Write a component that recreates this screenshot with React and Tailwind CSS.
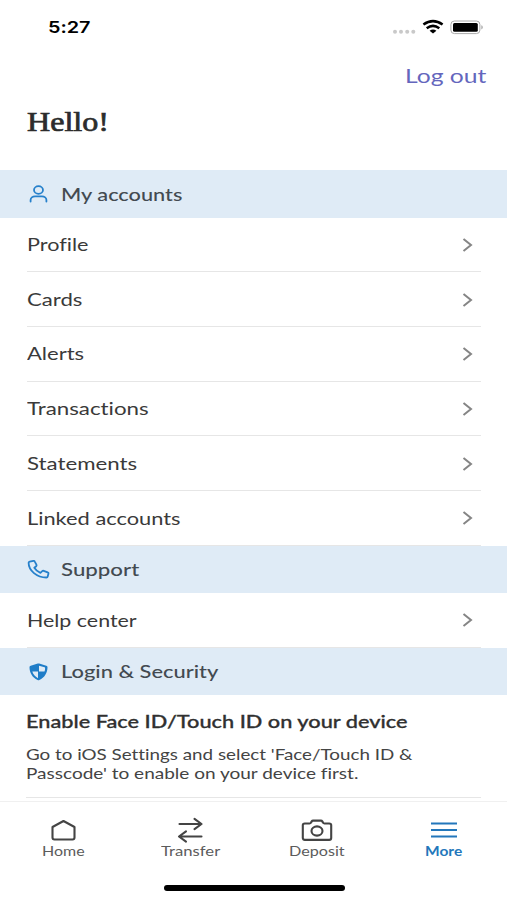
import { useLayoutEffect, useRef, useState } from "react";

// Wide lettering: stretches a line of text horizontally to the given width.
function Wide({ width, className = "", children }) {
  const ref = useRef(null);
  const [scale, setScale] = useState(1);
  useLayoutEffect(() => {
    const fit = () => setScale(width / ref.current.offsetWidth);
    fit();
    document.fonts?.ready.then(() => ref.current && fit());
  }, [width]);
  return (
    <span className={`block whitespace-nowrap ${className}`} style={{ width }}>
      <span ref={ref} className="inline-block origin-left" style={{ transform: `scaleX(${scale})` }}>
        {children}
      </span>
    </span>
  );
}

function PersonIcon() {
  return (
    <svg className="h-6 w-6" viewBox="0 0 24 24" fill="none" stroke="#2680cb" strokeWidth="1.8" strokeLinecap="round">
      <ellipse cx="11.5" cy="8" rx="4.5" ry="3.8" />
      <path d="M3.600 19.500V18c0-2.100 2-3.700 4.400-3.700h7c2.400 0 4.400 1.600 4.400 3.700v1.500" />
    </svg>
  );
}

function PhoneIcon() {
  return (
    <svg className="h-6 w-6" viewBox="0 0 24 24" fill="none" stroke="#2680cb" strokeWidth="1.800" strokeLinejoin="round">
      <path d="M2.700 3.600 6.400 2.900c.6-.1 1.200.2 1.400.7l1.700 3.300c.2.500.1 1-.3 1.300L7.300 9.800c1.400 2.300 3.400 4 6.100 5.100l1.800-1.700c.4-.4 1-.5 1.500-.3l4 1.500c.6.2.9.7.8 1.200l-.8 3c-.1.500-.7.900-1.300.9C9.900 19.500 1.600 12.600 1.600 4.800c0-.6.500-1.100 1.100-1.200Z" />
    </svg>
  );
}

function ShieldIcon() {
  return (
    <svg className="h-6 w-6" viewBox="0 0 24 24">
      <path fill="#1f7dc8" d="M10.800 3.500q.7-.2 1.400 0L19.300 5.700c.7.200 1.200.7 1.200 1.400 0 5.900-3 10.600-8.100 13-.6.300-1.200.3-1.800 0-5.100-2.400-8.100-7.100-8.100-13 0-.7.500-1.200 1.200-1.400Z" />
      <path fill="#dfebf6" d="M12 5.700 17.600 7.300c.3.100.5.300.5.600 0 1.300-.2 2.500-.6 3.700H12ZM11 11.600v6.600c-2.900-1.500-4.900-3.700-5.700-6.600Z" />
    </svg>
  );
}

function Section({ icon, title, width }) {
  return (
    <div className="flex h-[47.5px] shrink-0 items-center gap-[10px] bg-[#dfebf6] pl-[27px] pt-px text-[17px] font-medium text-[#434a51]">
      {icon}
      <Wide width={width}>{title}</Wide>
    </div>
  );
}

function Row({ title, width }) {
  return (
    <div className="ml-[27px] mr-[26px] flex h-[54.700px] shrink-0 items-center justify-between border-b border-[#e6e6e6] pr-[8px] text-[17px] text-[#3a3a3a]">
      <Wide width={width} className="pt-px">{title}</Wide>
      <svg className="mt-px h-[14px] w-[11px]" viewBox="0 0 11 14" fill="none" stroke="#858585" strokeWidth="2">
        <path d="M1.500 1 9 7l-7.500 6" />
      </svg>
    </div>
  );
}

function Tab({ label, width, icon, active }) {
  return (
    <div className={`flex flex-1 flex-col items-center pt-[14px] text-[13px] leading-4 ${active ? "font-bold text-[#2377bb]" : "text-[#5c5c5c]"}`}>
      <svg className="h-7 w-8" viewBox="0 0 32 28" fill="none" stroke={active ? "#2377bb" : "#444"} strokeWidth="2.100" strokeLinecap="round" strokeLinejoin="round">
        {icon}
      </svg>
      <Wide width={width} className="-mt-px">{label}</Wide>
    </div>
  );
}

export default function App() {
  return (
    <div className="flex h-[900px] w-[507px] flex-col overflow-hidden bg-white font-['Lato','Open_Sans',sans-serif] [font-variant-ligatures:none]">
      <div className="flex h-[54px] shrink-0 items-center justify-between pl-[47.5px] pr-[23px]">
        <Wide width={42} className="pt-px font-['Inter',sans-serif] text-[16.500px] font-semibold text-black">5:27</Wide>
        <svg className="h-5 w-[92px]" viewBox="0 0 92 20">
          <g fill="#c9c9c9">
            <circle cx="3" cy="14.700" r="2" />
            <circle cx="9" cy="14.700" r="2" />
            <circle cx="15.200" cy="14.700" r="2" />
            <circle cx="21.300" cy="14.700" r="2" />
          </g>
          <g fill="none" stroke="#000" strokeWidth="2.500">
            <path d="M31.400 7.600q9.600-7 19.200 0M34.700 11.200q6.300-4.600 12.600 0" />
          </g>
          <path d="M37.600 13.700q3.400-2.200 6.800 0L41 16.500Z" />
          <rect x="58.900" y="4" width="29" height="12.600" rx="3.500" fill="none" stroke="#aaa" />
          <rect x="61" y="5.900" width="24.800" height="8.800" rx="1.500" />
          <path fill="#aaa" d="M89.300 8.200c2 .7 2 3.500 0 4.200Z" />
        </svg>
      </div>
      <div className="flex h-[42px] shrink-0 items-center justify-end pr-[21.5px] pt-px text-[19.500px] text-[#6466bd]">
        <Wide width={81}>Log out</Wide>
      </div>
      <div className="h-[74px] shrink-0 pl-[27px] pt-[8px] font-['Liberation_Serif',serif] text-[27px] leading-9 text-[#2c2c2c] [-webkit-text-stroke:0.7px_#2c2c2c]">
        <Wide width={82}>Hello!</Wide>
      </div>
      <Section icon={<PersonIcon />} title="My accounts" width={121.5} />
      <Row title="Profile" width={61} />
      <Row title="Cards" width={56} />
      <Row title="Alerts" width={57} />
      <Row title="Transactions" width={122} />
      <Row title="Statements" width={110} />
      <Row title="Linked accounts" width={154} />
      <Section icon={<PhoneIcon />} title="Support" width={78.5} />
      <Row title="Help center" width={109.5} />
      <Section icon={<ShieldIcon />} title="Login & Security" width={157} />
      <div className="ml-[26px] mr-[26px] h-[102.300px] shrink-0 border-b border-[#e6e6e6] pt-[15px]">
        <Wide width={381} className="text-[17px] font-medium leading-6 text-[#303030] [-webkit-text-stroke:0.3px_#303030]">Enable Face ID/Touch ID on your device</Wide>
        <div className="pt-[11px] text-[15px] leading-[18.500px] text-[#444]">
          <Wide width={387}>Go to iOS Settings and select 'Face/Touch ID &amp;</Wide>
          <Wide width={333}>Passcode' to enable on your device first.</Wide>
        </div>
      </div>
      <div className="mt-[3px] flex h-[66px] shrink-0 border-t border-[#f0f0f0]">
        <Tab label="Home" width={43} icon={<path d="M16.500 5 27.500 11v10.500c0 1.200-.8 2-2 2h-18c-1.200 0-2-.8-2-2V11Z" />} />
        <Tab
          label="Transfer"
          width={59}
          icon={<path d="M5.500 8h22M20.500 2.800 27.500 8l-7 5.200M27.500 20.500h-22M12 15.300l-7 5.200 7 5.200" />}
        />
        <Tab
          label="Deposit"
          width={56}
          icon={
            <>
              <path d="M3.800 7.500h4.700c.7 0 1.200-.3 1.500-.9l.7-1.200c.3-.5.8-.8 1.400-.8h7.800c.6 0 1.100.3 1.400.8l.7 1.200c.3.600.8.900 1.500.9h4.700c1.200 0 2 .8 2 1.800v12.800c0 1-.8 1.800-2 1.800H3.800c-1.200 0-2-.8-2-1.800V9.300c0-1 .8-1.800 2-1.800Z" />
              <ellipse cx="16" cy="15" rx="5.500" ry="4.600" />
            </>
          }
        />
        <Tab active label="More" width={37} icon={<path strokeLinecap="butt" d="M3 7.500h26M3 14h26M3 20.500h26" />} />
      </div>
      <div className="flex pl-[164px] pt-[18.500px]">
        <div className="h-[5.500px] w-[180.500px] rounded-full bg-black" />
      </div>
    </div>
  );
}
